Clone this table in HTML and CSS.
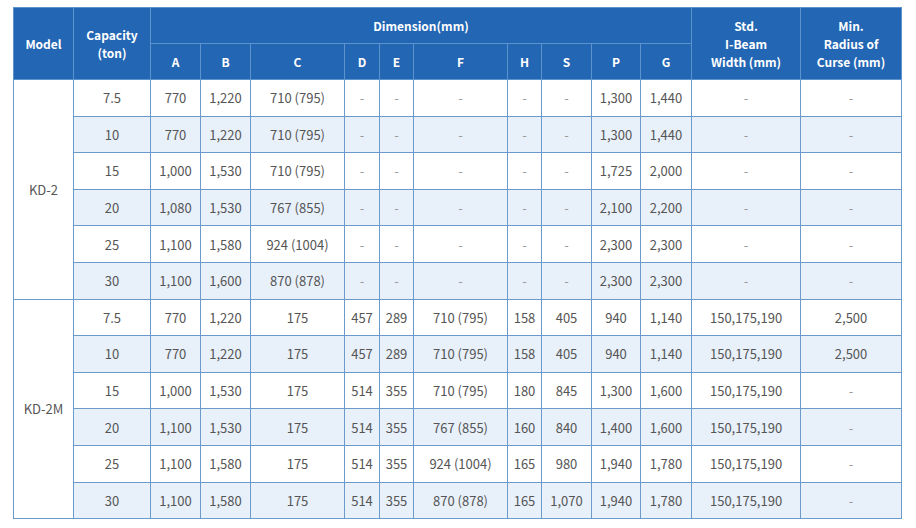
FILE: index.html
```html
<!DOCTYPE html>
<html>
<head>
<meta charset="utf-8">
<link rel="stylesheet" href="styles.css">
</head>
<body>
<table class="spec">
  <colgroup>
    <col style="width:60px"><col style="width:77px"><col style="width:50px"><col style="width:50px"><col style="width:94px"><col style="width:35px"><col style="width:34px"><col style="width:94px"><col style="width:34px"><col style="width:50px"><col style="width:49px"><col style="width:51px"><col style="width:109px"><col style="width:101px">
  </colgroup>
  <thead>
    <tr class="h1">
      <th rowspan="2">Model</th>
      <th rowspan="2">Capacity<br>(ton)</th>
      <th colspan="10">Dimension(mm)</th>
      <th rowspan="2">Std.<br>I-Beam<br>Width (mm)</th>
      <th rowspan="2">Min.<br>Radius of<br>Curse (mm)</th>
    </tr>
    <tr class="h2">
      <th>A</th><th>B</th><th>C</th><th>D</th><th>E</th><th>F</th><th>H</th><th>S</th><th>P</th><th>G</th>
    </tr>
  </thead>
  <tbody>
    <tr><td rowspan="6" class="model">KD-2</td><td>7.5</td><td>770</td><td>1,220</td><td>710 (795)</td><td class="dash">-</td><td class="dash">-</td><td class="dash">-</td><td class="dash">-</td><td class="dash">-</td><td>1,300</td><td>1,440</td><td class="dash">-</td><td class="dash">-</td></tr>
    <tr class="alt"><td>10</td><td>770</td><td>1,220</td><td>710 (795)</td><td class="dash">-</td><td class="dash">-</td><td class="dash">-</td><td class="dash">-</td><td class="dash">-</td><td>1,300</td><td>1,440</td><td class="dash">-</td><td class="dash">-</td></tr>
    <tr><td>15</td><td>1,000</td><td>1,530</td><td>710 (795)</td><td class="dash">-</td><td class="dash">-</td><td class="dash">-</td><td class="dash">-</td><td class="dash">-</td><td>1,725</td><td>2,000</td><td class="dash">-</td><td class="dash">-</td></tr>
    <tr class="alt"><td>20</td><td>1,080</td><td>1,530</td><td>767 (855)</td><td class="dash">-</td><td class="dash">-</td><td class="dash">-</td><td class="dash">-</td><td class="dash">-</td><td>2,100</td><td>2,200</td><td class="dash">-</td><td class="dash">-</td></tr>
    <tr><td>25</td><td>1,100</td><td>1,580</td><td>924 (1004)</td><td class="dash">-</td><td class="dash">-</td><td class="dash">-</td><td class="dash">-</td><td class="dash">-</td><td>2,300</td><td>2,300</td><td class="dash">-</td><td class="dash">-</td></tr>
    <tr class="alt"><td>30</td><td>1,100</td><td>1,600</td><td>870 (878)</td><td class="dash">-</td><td class="dash">-</td><td class="dash">-</td><td class="dash">-</td><td class="dash">-</td><td>2,300</td><td>2,300</td><td class="dash">-</td><td class="dash">-</td></tr>
    <tr><td rowspan="6" class="model">KD-2M</td><td>7.5</td><td>770</td><td>1,220</td><td>175</td><td>457</td><td>289</td><td>710 (795)</td><td>158</td><td>405</td><td>940</td><td>1,140</td><td>150,175,190</td><td>2,500</td></tr>
    <tr class="alt"><td>10</td><td>770</td><td>1,220</td><td>175</td><td>457</td><td>289</td><td>710 (795)</td><td>158</td><td>405</td><td>940</td><td>1,140</td><td>150,175,190</td><td>2,500</td></tr>
    <tr><td>15</td><td>1,000</td><td>1,530</td><td>175</td><td>514</td><td>355</td><td>710 (795)</td><td>180</td><td>845</td><td>1,300</td><td>1,600</td><td>150,175,190</td><td class="dash">-</td></tr>
    <tr class="alt"><td>20</td><td>1,100</td><td>1,530</td><td>175</td><td>514</td><td>355</td><td>767 (855)</td><td>160</td><td>840</td><td>1,400</td><td>1,600</td><td>150,175,190</td><td class="dash">-</td></tr>
    <tr><td>25</td><td>1,100</td><td>1,580</td><td>175</td><td>514</td><td>355</td><td>924 (1004)</td><td>165</td><td>980</td><td>1,940</td><td>1,780</td><td>150,175,190</td><td class="dash">-</td></tr>
    <tr class="alt"><td>30</td><td>1,100</td><td>1,580</td><td>175</td><td>514</td><td>355</td><td>870 (878)</td><td>165</td><td>1,070</td><td>1,940</td><td>1,780</td><td>150,175,190</td><td class="dash">-</td></tr>
  </tbody>
</table>
</body>
</html>
```

FILE: styles.css
```css
html, body {
  margin: 0;
  padding: 0;
  background: #ffffff;
}
body {
  padding: 7px 0 0 13px;
  font-family: "Noto Sans CJK KR", "Noto Sans", sans-serif;
}
.spec {
  border-collapse: collapse;
  table-layout: fixed;
  width: 889px;
  font-size: 13px;
  color: #555555;
  border: 1px solid #7fa3c8;
}
.spec th {
  background: #2366b3;
  color: #ffffff;
  font-weight: 700;
  font-size: 12px;
  line-height: 18px;
  padding: 0;
  text-align: center;
  vertical-align: middle;
  border: 1px solid #5d93cd;
}
.spec .h1 th, .spec .h2 th {
  height: 35px;
}
.spec td {
  height: 35.6px;
  padding: 0;
  text-align: center;
  vertical-align: middle;
  border: 1px solid #6b9acb;
  background: #ffffff;
  white-space: nowrap;
}
.spec tr.alt td {
  background: #e8f0fa;
}
.spec td.model {
  background: #ffffff;
}
.spec td.dash {
  color: #9a9a9a;
}
```
